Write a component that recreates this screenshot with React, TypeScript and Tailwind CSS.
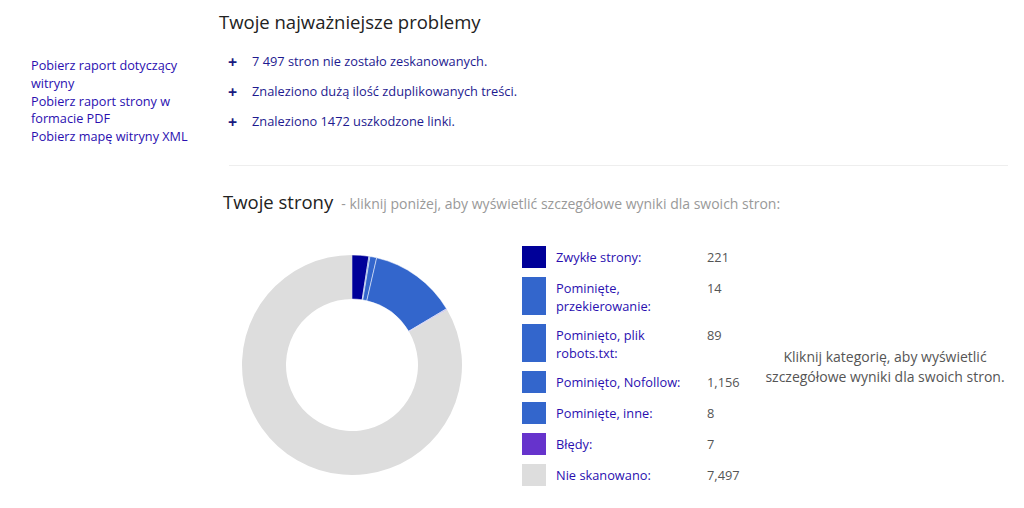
const font = { fontFamily: '"Open Sans", "Noto Sans", sans-serif' };

const issues = [
  "7 497 stron nie zostało zeskanowanych.",
  "Znaleziono dużą ilość zduplikowanych treści.",
  "Znaleziono 1472 uszkodzone linki.",
];

const categories = [
  { label: "Zwykłe strony:", value: 221, text: "221", color: "#000099", tall: false },
  { label: "Pominięte, przekierowanie:", value: 14, text: "14", color: "#3366cc", tall: true },
  { label: "Pominięto, plik robots.txt:", value: 89, text: "89", color: "#3366cc", tall: true },
  { label: "Pominięto, Nofollow:", value: 1156, text: "1,156", color: "#3366cc", tall: false },
  { label: "Pominięte, inne:", value: 8, text: "8", color: "#3366cc", tall: false },
  { label: "Błędy:", value: 7, text: "7", color: "#6633cc", tall: false },
  { label: "Nie skanowano:", value: 7497, text: "7,497", color: "#dddddd", tall: false },
];

function arcPath(cx: number, cy: number, r1: number, r2: number, a0: number, a1: number) {
  const p = (r: number, a: number) => [cx + r * Math.cos(a), cy + r * Math.sin(a)];
  const large = a1 - a0 > Math.PI ? 1 : 0;
  const [x0, y0] = p(r2, a0);
  const [x1, y1] = p(r2, a1);
  const [x2, y2] = p(r1, a1);
  const [x3, y3] = p(r1, a0);
  return `M${x0} ${y0} A${r2} ${r2} 0 ${large} 1 ${x1} ${y1} L${x2} ${y2} A${r1} ${r1} 0 ${large} 0 ${x3} ${y3} Z`;
}

function Donut() {
  const total = categories.reduce((s, c) => s + c.value, 0);
  let a = -Math.PI / 2;
  return (
    <svg width="222" height="222" viewBox="0 0 222 222">
      {categories.map((c, i) => {
        const a0 = a;
        const a1 = a + (c.value / total) * Math.PI * 2;
        a = a1;
        return (
          <path
            key={i}
            d={arcPath(111, 111, 66, 110, a0, a1)}
            fill={c.color}
            stroke="#ffffff"
            strokeWidth={c.color === "#dddddd" ? 0 : 0.5}
          />
        );
      })}
    </svg>
  );
}

export default function App() {
  return (
    <div className="w-[1024px] h-[508px] bg-white flex overflow-hidden" style={font}>
      {/* Download links */}
      <div className="w-[219px] shrink-0 pl-[31px] pt-[57px]">
        <div className="w-[165px] flex flex-col text-[12.7px] leading-[17.75px] text-[#2a0fb0]">
          <a>Pobierz raport dotyczący witryny</a>
          <a>Pobierz raport strony w formacie PDF</a>
          <a>Pobierz mapę witryny XML</a>
        </div>
      </div>

      <div className="flex-1 min-w-0 pr-[16px]">
        {/* Top issues */}
        <h1 className="text-[18.5px] leading-[24px] text-[#222] mt-[10px]">Twoje najważniejsze problemy</h1>
        <ul className="mt-[19px] ml-[9px] flex flex-col gap-[12px]">
          {issues.map((t) => (
            <li key={t} className="flex items-center h-[18px] text-[12.8px] text-[#1e1a8f]">
              <span className="w-[24px] text-[16px] font-bold leading-none text-[#1a1a80]">+</span>
              <span>{t}</span>
            </li>
          ))}
        </ul>
        <div className="ml-[10px] mt-[34px] border-t border-[#eeeeee]" />

        {/* Pages */}
        <div className="mt-[22px] ml-[4px] flex items-baseline gap-[8px]">
          <h2 className="text-[18.5px] text-[#222]">Twoje strony</h2>
          <span className="text-[14px] text-[#999]">- kliknij poniżej, aby wyświetlić szczegółowe wyniki dla swoich stron:</span>
        </div>

        <div className="flex mt-[30px]">
          <div className="ml-[22px] mt-[8px] shrink-0">
            <Donut />
          </div>
          <div className="ml-[59px] flex flex-col gap-[9px] w-[240px] shrink-0">
            {categories.map((c) => (
              <div key={c.label} className="flex text-[12.8px] leading-[18px] cursor-pointer">
                <div
                  className={`w-[24px] shrink-0 ${c.tall ? "h-[38px]" : "h-[22px]"}`}
                  style={{ backgroundColor: c.color }}
                />
                <div className="w-[161px] pl-[10px] pt-[2px] text-[#2a0fb0]">{c.label}</div>
                <div className="pt-[2px] text-[#555]">{c.text}</div>
              </div>
            ))}
          </div>
          <div className="flex-1 min-w-0 flex items-center justify-center pt-[2px] text-[14px] leading-[20px] text-[#555] text-center">
            <p>Kliknij kategorię, aby wyświetlić szczegółowe wyniki dla swoich stron.</p>
          </div>
        </div>
      </div>
    </div>
  );
}
